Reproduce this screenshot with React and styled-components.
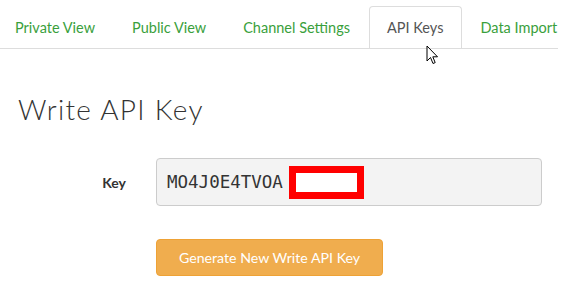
import React from 'react';
import styled, { createGlobalStyle } from 'styled-components';

const GlobalStyle = createGlobalStyle`
  html, body {
    margin: 0;
    padding: 0;
    background: #fff;
  }
  body {
    font-family: Lato, "Open Sans", sans-serif;
    color: #333;
  }
`;

const Page = styled.div`
  position: relative;
  width: 572px;
  height: 290px;
  overflow: hidden;
`;

const TabBar = styled.ul`
  display: flex;
  align-items: flex-end;
  width: 558px;
  height: 49px;
  margin: 0;
  padding: 0;
  list-style: none;
  border-bottom: 1px solid #ddd;
  box-sizing: border-box;
  white-space: nowrap;
  overflow: hidden;
`;

const Tab = styled.li`
  height: 43px;
  margin-bottom: -1px;
  padding: 0 18px 0 ${p => (p.$first ? 14 : 17)}px;
  display: flex;
  align-items: center;
  font-size: 14.5px;
  color: ${p => (p.$active ? '#555' : '#3a9f3c')};
  background: #fff;
  border: 1px solid ${p => (p.$active ? '#ddd' : 'transparent')};
  border-bottom-color: ${p => (p.$active ? '#fff' : 'transparent')};
  border-radius: 4px 4px 0 0;
  box-sizing: border-box;
`;

const Content = styled.div`
  padding: 0 0 0 18px;
`;

const Heading = styled.h2`
  margin: 43px 0 0;
  font-size: 28px;
  font-weight: 300;
  color: #333;
  letter-spacing: 1.3px;
`;

const FormRow = styled.div`
  display: grid;
  grid-template-columns: 108px 386px;
  column-gap: 30px;
  align-items: center;
  margin-top: 32px;
`;

const Label = styled.label`
  text-align: right;
  font-size: 14px;
  font-weight: 700;
  color: #333;
`;

const KeyBox = styled.div`
  height: 48px;
  box-sizing: border-box;
  display: flex;
  align-items: center;
  padding: 0 10px;
  background: #f3f3f3;
  border: 1px solid #ccc;
  border-radius: 4px;
  font-family: "DejaVu Sans Mono", "Liberation Mono", monospace;
  font-size: 17.5px;
  color: #333;
`;

const Redacted = styled.span`
  display: inline-block;
  width: 75px;
  height: 33px;
  box-sizing: border-box;
  border: 7px solid #f00;
  background: #fff;
  margin-left: 6px;
`;

const ButtonRow = styled.div`
  display: grid;
  grid-template-columns: 108px auto;
  column-gap: 30px;
  margin-top: 33px;
  justify-items: start;
`;

const GenerateButton = styled.button`
  grid-column: 2;
  height: 37px;
  width: 227px;
  border: 1px solid #eea236;
  border-radius: 4px;
  background: #f0ad4e;
  color: #fff;
  font-family: Lato, "Open Sans", sans-serif;
  font-size: 14.2px;
  padding: 0;
`;

const Cursor = styled.svg`
  position: absolute;
  left: 426px;
  top: 45px;
`;

const tabs = ['Private View', 'Public View', 'Channel Settings', 'API Keys', 'Data Import'];

export default function App() {
  return (
    <Page>
      <GlobalStyle />
      <TabBar>
        {tabs.map((t, i) => (
          <Tab key={t} $first={i === 0} $active={t === 'API Keys'}>{t}</Tab>
        ))}
      </TabBar>
      <Content>
        <Heading>Write API Key</Heading>
        <FormRow>
          <Label>Key</Label>
          <KeyBox>
            MO4J0E4TVOA<Redacted />
          </KeyBox>
        </FormRow>
        <ButtonRow>
          <GenerateButton>Generate New Write API Key</GenerateButton>
        </ButtonRow>
      </Content>
      <Cursor width="14" height="22" viewBox="0 0 14 22">
        <path d="M1 1 L1 16 L4.5 12.5 L7 18.5 L9.2 17.6 L6.8 11.8 L11.5 11.8 Z" fill="#fff" stroke="#000" strokeWidth="1" strokeLinejoin="miter" />
      </Cursor>
    </Page>
  );
}
